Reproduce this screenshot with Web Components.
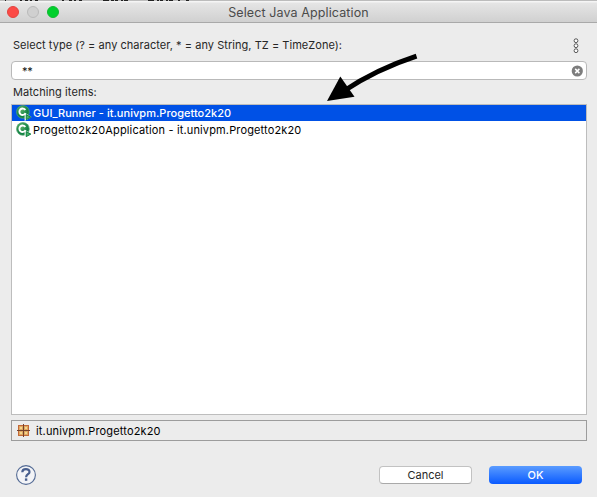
<!DOCTYPE html>
<html lang="en"><head><meta charset="utf-8"><title>Select Java Application</title>
<style>html,body{margin:0;height:100%;overflow:hidden;background:#ececec}body{font:11px Inter,"Liberation Sans",sans-serif;color:#262626}</style></head>
<body>
<java-dialog></java-dialog>
<script>
const define=(name,html)=>{const t=document.createElement('template');t.innerHTML=html;
customElements.define(name,class extends HTMLElement{constructor(){super();this.attachShadow({mode:'open'}).append(t.content.cloneNode(true));}});};

define('title-bar',`<style>
:host{display:flex;align-items:center;box-sizing:border-box;height:23px;position:relative;background:linear-gradient(#bcbcbc 0 1px,#f5f5f5 1px 2px,#e5e5e5 3px,#d0d0d0);border-bottom:1px solid #a9a9a9;padding:2px 0 0 7px;gap:8px}
i{box-sizing:border-box;width:12px;height:12px;border-radius:50%;border:1px solid #e2443f;background:#fc4a46}
i.min{background:#d0d0d0;border-color:#bababa}i.max{background:#00d02c;border-color:#12b932}
.t{flex:1;text-align:center;font-size:12.5px;line-height:20px;color:#4b4b4b;letter-spacing:.11px;margin-right:67px;padding-top:2px;white-space:nowrap}
svg{position:absolute;left:0;top:0}
</style><svg width="200" height="2"><path d="M5 .5h1M20 .5h2M25 .5h3M30 .5h2M35 .5h3M62 .5h2M69 .5h3M74 .5h2M79 .5h3M103 .5h6M111 .5h3M115 .5h3M121 .5h2M124 .5h4M148 .5h6M157 .5h2M160 .5h3M166 .5h2M169 .5h4M178 .5h2M186 .5h3" stroke="#222"/></svg><i></i><i class="min"></i><i class="max"></i><div class="t"><slot></slot></div>`);

define('search-field',`<style>
:host{display:flex;align-items:center;justify-content:space-between;box-sizing:border-box;height:19px;border:1px solid #b9b9b9;border-radius:4px;background:#fff;padding:0 3px 0 10px;color:#111}
span{line-height:17px;padding-top:1px;letter-spacing:-.2px}svg{display:block}
</style><span><slot></slot></span><svg width="12" height="12"><circle cx="6.3" cy="6" r="5.6" fill="#7d7d7d"/><path d="m4.2 3.9 4.2 4.2m0-4.2L4.2 8.1" stroke="#fff" stroke-width="1.5"/></svg>`);

define('class-row',`<style>
:host{display:flex;align-items:center;height:17px;padding-left:4px;color:#000;white-space:nowrap;--track:.145px}
:host([selected]){background:#0051e6;color:#fff;height:16px;font-weight:500;--track:.03px}
svg{display:block;flex:none;margin-right:1px}span{letter-spacing:var(--track);line-height:16px}
</style><svg width="16" height="16" viewBox="0 0 16 16"><defs><radialGradient id="g" cx=".38" cy=".3"><stop stop-color="#62b56b"/><stop offset="1" stop-color="#128344"/></radialGradient></defs><circle cx="6.9" cy="6.9" r="6.4" fill="url(#g)" stroke="#5aa874" stroke-width=".7"/><path d="M9.3 5A3.2 3.2 0 1 0 9.3 8.5" fill="none" stroke="#fff" stroke-width="1.9"/><path d="M8.6 7.6v8.4L15.5 12z" fill="#fff"/><path d="M10.2 9.6v5l4.6-2.5z" fill="#49b265" stroke="#087e3e"/></svg><span><slot></slot></span>`);

define('match-list',`<style>:host{display:block;box-sizing:border-box;height:311px;border:1px solid #bdbdbd;background:#fff}</style><slot></slot>`);

define('package-status',`<style>
:host{display:flex;align-items:center;box-sizing:border-box;height:21px;border:1px solid #9c9c9c;padding-left:5px;gap:6px;color:#000}
span{letter-spacing:.15px}svg{display:block}
</style><svg width="13" height="13"><path d="M1 1h11v11H1z" fill="#c26938"/><path d="M2 2h4v4H2zm5 0h4v4H7zM2 7h4v4H2zm5 0h4v4H7z" fill="#e0a862"/><path d="M3 3h2v2H3zm5 0h2v2H8zM3 8h2v2H3zm5 0h2v2H8z" fill="#f3d68c"/><path d="M6.5 0v13M0 6.5h13" stroke="#74412b"/></svg><span><slot></slot></span>`);

define('push-button',`<style>
:host{box-sizing:border-box;width:93px;height:18px;border:1px solid #c2c2c2;border-bottom-color:#a9a9a9;border-radius:4px;background:#fff;text-align:center;line-height:17px;letter-spacing:0;display:block}
:host([primary]){background:linear-gradient(#5b9cff,#0a5aff);border:0;color:#fff;font-weight:500;line-height:18px}
</style><slot></slot>`);

define('view-menu',`<style>:host{display:block;width:6px;height:16px}svg{display:block}</style><svg width="6" height="16" fill="#fff" stroke="#555"><circle cx="3" cy="2.7" r="1.9"/><circle cx="3" cy="7.7" r="1.9"/><circle cx="3" cy="12.7" r="1.9"/></svg>`);

define('help-button',`<style>:host{display:block;width:20px;height:20px}svg{display:block}</style><svg width="20" height="20"><circle cx="10" cy="10" r="9.4" fill="#f3f4f7" stroke="#536a94" stroke-width="1.1"/><path d="M6.3 7.2C6.3 3.2 13.5 3.1 13.5 6.9 13.5 9.3 10.2 9.2 10.1 12.2" fill="none" stroke="#495f8e" stroke-width="2.2"/><path d="M8.9 13.4h2.4v2.4H8.9z" fill="#495f8e"/></svg>`);

define('pointer-arrow',`<style>:host{position:absolute;left:320px;top:48px;pointer-events:none}svg{display:block}</style><svg width="104" height="60"><path d="M96.5 8.2Q57 21 23 43.5" fill="none" stroke="#000" stroke-width="5"/><path d="M7 53 20.3 28.5 34.5 48.8z"/></svg>`);

define('java-dialog',`<style>
:host{display:flex;flex-direction:column;width:597px;height:497px;position:relative;background:#ececec}
main{display:flex;flex-direction:column;padding:0 10px 0 11px}
.prompt{display:flex;justify-content:space-between;align-items:center;height:38px;padding:0 8px 0 2px}
.prompt span{letter-spacing:.04px;padding-top:6px}.prompt view-menu{margin-top:7px}
.label{height:24px;line-height:25px;padding-left:2px;letter-spacing:.08px}
package-status{margin-top:5px}
footer{display:flex;align-items:center;height:68px;padding:0 5px}
footer help-button{margin-right:auto}push-button+push-button{margin-left:17px}
</style>
<title-bar>Select Java Application</title-bar>
<main><div class="prompt"><span>Select type (? = any character, * = any String, TZ = TimeZone):</span><view-menu></view-menu></div>
<search-field>**</search-field><div class="label">Matching items:</div>
<match-list><class-row selected>GUI_Runner - it.univpm.Progetto2k20</class-row><class-row>Progetto2k20Application - it.univpm.Progetto2k20</class-row></match-list>
<package-status>it.univpm.Progetto2k20</package-status>
<footer><help-button></help-button><push-button>Cancel</push-button><push-button primary>OK</push-button></footer></main>
<pointer-arrow></pointer-arrow>`);
</script></body></html>
